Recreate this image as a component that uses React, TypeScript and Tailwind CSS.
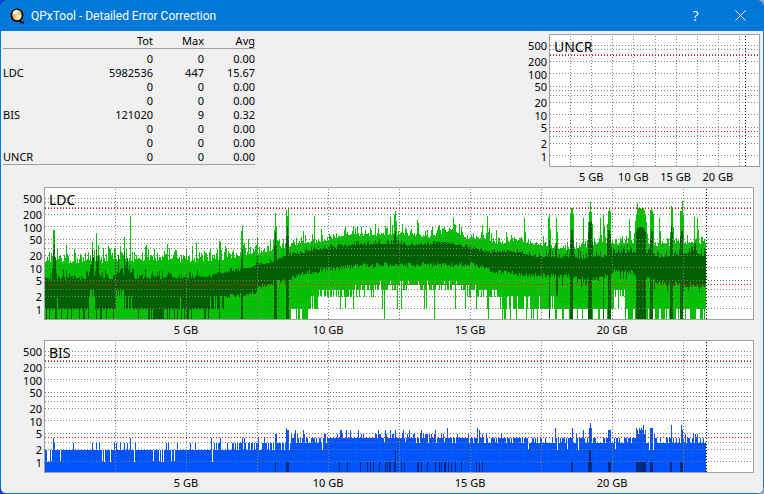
import React from 'react';

// ─── Types ───────────────────────────────────────────────────────────────────

type Range = [top: number, bottom: number];
type Keys = [x: number, value: number][];

interface Column {
  x: number;
  full: Range;
  avg?: Range;
}

// ─── Helpers ─────────────────────────────────────────────────────────────────

const PLOT_H = 131;
const DECADE = 41;

// Row of a value on the logarithmic axis
const rowOf = (value: number) => Math.round(121.4 - DECADE * Math.log10(value));

const lerp = (keys: Keys, x: number) => {
  for (let i = 1; i < keys.length; i++) {
    const [x0, v0] = keys[i - 1];
    const [x1, v1] = keys[i];
    if (x <= x1) return v0 + ((v1 - v0) * (x - x0)) / (x1 - x0);
  }
  return keys[keys.length - 1][1];
};

const makeRandom = (seed: number) => () => {
  seed = (seed * 1664525 + 1013904223) % 4294967296;
  return seed / 4294967296;
};

const inside = (ranges: number[][], x: number) => ranges.some(([a, b]) => x >= a && x <= b);

// ─── LDC samples ─────────────────────────────────────────────────────────────

const LDC_TOP: Keys = [
  [0, 74], [45, 74], [110, 72], [145, 73], [180, 71], [212, 65], [230, 61], [255, 56], [283, 52],
  [297, 48], [345, 46], [357, 46], [385, 49], [400, 44], [410, 43], [420, 50], [435, 50], [455, 56],
  [470, 52], [490, 56], [515, 61], [535, 60], [555, 54], [575, 56], [595, 54], [620, 59], [631, 54],
  [645, 56], [660, 56],
];
const LDC_AVG_TOP: Keys = [
  [0, 91], [145, 90], [165, 88], [175, 85], [195, 82], [212, 77], [225, 74], [243, 67], [275, 61],
  [300, 58], [310, 56], [350, 55], [365, 57], [385, 56], [395, 54], [410, 56], [425, 60], [445, 64],
  [465, 63], [495, 69], [520, 69], [535, 70], [560, 68], [580, 64], [600, 64], [615, 69], [650, 64],
  [660, 68],
];
const LDC_AVG_BOTTOM: Keys = [
  [181, 108], [210, 105], [212, 100], [225, 95], [240, 93], [255, 85], [275, 82], [300, 79], [315, 77],
  [345, 76], [425, 76], [435, 77], [445, 83], [475, 86], [515, 88], [555, 90], [569, 82], [580, 82],
  [595, 87], [615, 95], [660, 97],
];
// Lowest value that still occurs, by position
const LDC_MIN: Keys = [
  [283, 2.6], [300, 2.4], [320, 3.2], [335, 3.6], [360, 3.6], [395, 4], [412, 3.6], [430, 3], [455, 2.2],
];

const LDC_PEAKS = new Map<number, number>([
  [8, 42], [9, 42], [21, 57], [29, 61], [47, 54], [49, 62], [51, 45], [53, 57], [58, 60], [63, 58],
  [69, 61], [75, 58], [79, 49], [81, 61], [85, 28], [87, 64], [100, 59], [103, 61], [122, 56], [124, 60],
  [131, 62], [141, 61], [147, 58], [151, 55], [165, 60], [174, 53], [175, 54], [181, 60], [188, 62],
  [196, 43], [197, 38], [205, 59], [212, 50], [219, 60], [223, 58], [229, 42], [230, 25], [231, 38],
  [232, 52], [234, 52], [241, 22], [242, 28], [243, 21], [258, 43], [269, 28], [276, 41], [300, 38],
  [308, 38], [310, 40], [330, 36], [345, 29], [349, 27], [350, 23], [351, 33], [372, 32], [373, 35],
  [397, 40], [403, 43], [408, 30], [437, 37], [442, 28], [444, 40], [451, 42], [479, 30], [480, 44],
  [498, 48], [503, 30], [504, 27], [505, 41], [511, 30], [512, 44], [525, 25], [526, 20], [527, 20],
  [528, 27], [538, 30], [543, 34], [544, 24], [545, 14], [546, 24], [547, 36], [555, 30], [558, 26],
  [559, 38], [562, 36], [563, 23], [564, 19], [565, 23], [584, 31], [585, 43], [589, 45], [590, 33],
  [591, 27], [592, 15], [593, 20], [594, 21], [595, 20], [596, 21], [597, 20], [598, 20], [599, 22],
  [600, 26], [601, 34], [602, 46], [605, 22], [606, 20], [607, 23], [608, 26], [614, 30], [615, 43],
  [625, 44], [626, 18], [627, 19], [628, 39], [635, 23], [636, 23], [637, 13], [638, 27], [649, 29],
  [652, 30], [653, 42],
]);
const LDC_AVG_PEAKS = new Map<number, number>([
  [7, 80], [8, 62], [9, 56], [10, 70], [21, 82], [47, 72], [48, 76], [51, 70], [53, 74], [70, 74],
  [73, 78], [79, 70], [82, 76], [152, 82], [174, 72], [196, 70], [197, 61], [212, 68], [229, 58],
  [230, 44], [231, 58], [241, 48], [242, 38], [243, 48], [349, 46], [350, 43], [351, 50], [504, 52],
  [511, 55], [525, 52], [526, 42], [527, 42], [528, 50], [543, 44], [544, 34], [545, 33], [546, 34],
  [547, 54], [562, 50], [563, 42], [564, 42], [565, 46], [591, 43], [592, 40], [593, 40], [594, 38],
  [595, 39], [596, 39], [597, 39], [598, 40], [599, 42], [600, 44], [605, 50], [606, 43], [607, 43],
  [625, 50], [626, 38], [627, 44], [635, 48], [636, 43], [637, 43], [649, 56], [650, 55],
]);
const LDC_FULL_AVG = [
  [174, 174], [196, 197], [229, 231], [241, 243], [504, 504], [525, 527], [543, 546], [558, 558],
  [563, 565], [591, 600], [605, 607], [625, 627], [635, 637],
];

const buildLdc = (): Column[] => {
  const rnd = makeRandom(77);
  const columns: Column[] = [];
  for (let x = 0; x <= 660; x++) {
    const early = x < 240;
    const jitter = rnd() * rnd() * (early ? 17 : 13) - 1;
    let top = LDC_PEAKS.get(x) ?? lerp(LDC_TOP, x) - jitter;
    const avgJitter = rnd() * rnd() * (x > 145 && x < 500 ? 6 : 12) - 1;
    let avgTop = LDC_AVG_PEAKS.get(x) ?? lerp(LDC_AVG_TOP, x) - avgJitter;
    if (inside([[44, 53], [69, 84]], x)) avgTop -= rnd() * 14;

    let bottom = PLOT_H;
    let avgBottom: number;
    const pick = rnd();
    if (x < 165) {
      avgBottom = pick < 0.3 || inside([[108, 118]], x) ? PLOT_H : 121;
      if (inside([[44, 49], [71, 78]], x)) avgBottom = pick < 0.5 ? 102 : 108;
      if ([12, 80, 83, 86, 135].includes(x)) avgBottom = 108;
    } else if (x < 181) {
      avgBottom = pick < 0.5 ? 108 : 121;
    } else {
      avgBottom = lerp(LDC_AVG_BOTTOM, x) + rnd() * 5 - 2;
      if (x > 510 && pick < 0.15) avgBottom += 8;
      if (x === 511 || x === 512) avgBottom = 108;
    }

    if (x > 244 && x < 283) {
      bottom = pick < 0.75 ? 121 : 108;
      if (x < 263 && pick > 0.5) bottom = PLOT_H;
      if (x > 272) bottom = pick < 0.35 ? 121 : pick < 0.7 ? 108 : 102;
    } else if (x >= 283 && x < 455) {
      const low = Math.round(lerp(LDC_MIN, x) + (rnd() - 0.5) * 2);
      bottom = rowOf(Math.max(2, low));
      if (pick < 0.07) bottom = 121;
      if ([339, 389, 443].includes(x)) bottom = PLOT_H;
    } else if (x >= 455 && x < 569) {
      bottom = pick < (x - 385) / 150 ? 121 : 108;
      if (pick > 0.9 || pick < 0.06) bottom = PLOT_H;
    } else if (x >= 569 && x < 580) {
      bottom = pick < 0.5 ? 108 : pick < 0.8 ? 102 : 121;
    } else if (x >= 580) {
      bottom = pick < 0.6 ? 121 : PLOT_H;
    }

    if (inside(LDC_FULL_AVG, x)) {
      avgBottom = PLOT_H;
      bottom = PLOT_H;
    }
    top = Math.round(Math.min(top, avgTop));
    columns.push({
      x,
      full: [top, Math.round(bottom)],
      avg: [Math.round(avgTop), Math.round(Math.min(avgBottom, bottom))],
    });
  }
  return columns;
};

// ─── BIS samples ─────────────────────────────────────────────────────────────

const BIS_VALUES: Record<number, number[]> = {
  1: [2, 3, 4, 6, 15, 57, 59, 65, 89, 108, 114, 116, 118, 126, 129, 167],
  3: [
    9, 28, 47, 51, 54, 69, 71, 75, 79, 82, 90, 121, 123, 132, 145, 150, 169, 171, 173, 174, 182, 187,
    188, 190,
  ],
  4: [8, 85, 166, 175, 197, 199, 213, 219],
  5: [230, 231, 648, 650, 652, 593, 599],
  6: [
    242, 243, 250, 258, 295, 296, 301, 305, 313, 333, 340, 345, 350, 358, 364, 376, 390, 434, 563, 564,
    565, 538, 592, 600, 637, 545,
  ],
  7: [241, 402, 432, 510, 527, 544, 546, 591, 594, 596, 605, 606, 607],
  8: [598, 626, 636],
  9: [545],
};
const BIS_AVG = [
  [230, 230], [241, 243], [294, 294], [302, 302], [315, 315], [322, 322], [325, 325], [328, 328],
  [334, 334], [340, 340], [342, 342], [344, 345], [349, 350], [356, 356], [359, 359], [372, 373],
  [376, 376], [382, 382], [390, 390], [394, 394], [396, 396], [399, 400], [403, 403], [406, 406],
  [410, 410], [416, 416], [431, 431], [434, 434], [437, 437], [526, 527], [543, 546], [563, 565],
  [591, 600], [605, 607], [625, 626], [635, 637],
];

const buildBis = (): Column[] => {
  const rnd = makeRandom(19);
  const fixed = new Map<number, number>();
  Object.entries(BIS_VALUES).forEach(([value, xs]) => xs.forEach((x) => fixed.set(x, Number(value))));

  const columns: Column[] = [];
  for (let x = 0; x <= 660; x++) {
    const pick = rnd();
    let value = 2;
    if (x >= 190 && x < 245) value = pick < 0.75 ? 3 : 2;
    else if (x >= 245 && x < 283) value = pick < 0.05 ? 2 : pick < 0.35 ? 3 : pick < 0.85 ? 4 : 5;
    else if (x >= 283 && x < 420) value = pick < 0.06 ? 3 : pick < 0.75 ? 4 : 5;
    else if (x >= 420 && x < 475) value = pick < 0.2 ? 3 : pick < 0.9 ? 4 : 5;
    else if (x >= 475) value = pick < 0.08 ? 2 : pick < 0.55 ? 3 : pick < 0.93 ? 4 : 5;
    if (x > 592 && x < 600) value = 6;
    value = fixed.get(x) ?? value;

    const column: Column = { x, full: [rowOf(value), PLOT_H] };
    if (inside(BIS_AVG, x)) {
      const tall = x === 350 || x === 544 || x === 545;
      column.avg = [rowOf(tall ? 2 : 1), PLOT_H];
    }
    columns.push(column);
  }
  return columns;
};

const LDC_COLUMNS = buildLdc();
const BIS_COLUMNS = buildBis();

// ─── Chart ───────────────────────────────────────────────────────────────────

const GRID_VALUES = [1, 2, 3, 5, 10, 20, 30, 40, 50, 100, 200, 300, 400, 500];
const Y_TICKS = [500, 200, 100, 50, 20, 10, 5, 2, 1];
const X_TICKS = ['5 GB', '10 GB', '15 GB', '20 GB'];

const barsPath = (columns: Column[], key: 'full' | 'avg') =>
  columns
    .map((column) => {
      const range = column[key];
      return range ? `M${column.x} ${range[0]}h1V${range[1]}h-1z` : '';
    })
    .join('');

interface ChartProps {
  title: string;
  width: number;
  end: number;
  columns?: Column[];
  fill?: string;
  avgFill?: string;
}

const Chart: React.FC<ChartProps> = ({ title, width, end, columns = [], fill, avgFill }) => {
  const step = (width + 2) / 10;
  return (
    <section className="flex" aria-label={title}>
      <div className="grid w-[43px] shrink-0 grid-rows-[18px_16px_13px_12px_16px_13px_12px_16px_13px] content-start items-end pr-0.5 text-right leading-3">
        {Y_TICKS.map((tick) => (
          <span key={tick}>{tick}</span>
        ))}
      </div>
      <div className="min-w-0 flex-1">
        <div className="relative border border-[#a0a0a0] bg-white">
          <svg
            className="block h-[131px] w-full"
            viewBox={`0 0 ${width} ${PLOT_H}`}
            preserveAspectRatio="none"
            shapeRendering="crispEdges"
            aria-hidden="true"
          >
            <path d={barsPath(columns, 'full')} fill={fill} />
            <path d={barsPath(columns, 'avg')} fill={avgFill} />
            <g stroke="#808080" strokeDasharray="1 2">
              {GRID_VALUES.map((value) => (
                <path key={value} d={`M0 ${rowOf(value) - 0.5}H${width}`} />
              ))}
              {[1, 2, 3, 4, 5, 6, 7, 8, 9].map((i) => (
                <path key={i} d={`M${Math.round(i * step) - 0.5} 1V${PLOT_H}`} />
              ))}
            </g>
            <g stroke="#ff0000" strokeDasharray="1 2">
              <path d={`M0 20.5H${width}`} />
              <path d={`M0 96.5H${width}`} />
            </g>
            <path d={`M${end + 0.5} 1V${PLOT_H}`} stroke="#000" strokeDasharray="1 2" />
          </svg>
          <h2 className="absolute top-0.5 left-1 text-sm leading-5">{title}</h2>
        </div>
        <div className="mt-[3px] grid grid-cols-[1fr_2fr_2fr_2fr_2fr_1fr] text-center leading-[14px]">
          <span />
          {X_TICKS.map((tick) => (
            <span key={tick} className="whitespace-nowrap">{tick}</span>
          ))}
        </div>
      </div>
    </section>
  );
};

// ─── Summary table ───────────────────────────────────────────────────────────

const ROWS = [
  ['', '0', '0', '0.00'],
  ['LDC', '5982536', '447', '15.67'],
  ['', '0', '0', '0.00'],
  ['', '0', '0', '0.00'],
  ['BIS', '121020', '9', '0.32'],
  ['', '0', '0', '0.00'],
  ['', '0', '0', '0.00'],
  ['UNCR', '0', '0', '0.00'],
];

const Summary: React.FC = () => (
  <div className="ml-0.5 w-[252px]">
    <table className="w-full table-fixed border-collapse text-right leading-[14px]">
      <thead>
        <tr className="h-[14px]">
          <th className="w-[60px]" aria-label="Name" />
          <th className="font-normal">Tot</th>
          <th className="w-[51px] font-normal">Max</th>
          <th className="w-[51px] font-normal">Avg</th>
        </tr>
      </thead>
      <tbody className="border-y border-[#a0a0a0]">
        <tr className="h-[3px]" aria-hidden="true" />
        {ROWS.map(([name, tot, max, avg], i) => (
          <tr key={i} className="h-[14px]">
            <th className="p-0 text-left font-normal">{name}</th>
            <td className="p-0">{tot}</td>
            <td className="p-0">{max}</td>
            <td className="p-0">{avg}</td>
          </tr>
        ))}
      </tbody>
    </table>
  </div>
);

// ─── Title bar ───────────────────────────────────────────────────────────────

const AppIcon: React.FC = () => (
  <svg width="16" height="16" viewBox="0 0 16 16" aria-hidden="true">
    <path d="M9 11.5l3.5 3h2.5" fill="none" stroke="#000" strokeWidth="2" />
    <ellipse cx="8" cy="7.2" rx="6.4" ry="6.8" fill="#000" />
    <ellipse cx="8" cy="7" rx="4.6" ry="5.2" fill="#f8d080" />
    <path d="M8 7L3.6 5.4A4.6 5.2 0 0 1 8 1.8z" fill="#fff8e0" />
    <path d="M8 7l4.6.6A4.6 5.2 0 0 1 8.5 12.2z" fill="#fff0b0" />
    <path d="M8 7l-3.4 3.6A4.6 5.2 0 0 1 3.5 6z" fill="#f4a850" />
    <circle cx="8" cy="7" r="1.6" fill="#e8f0f8" />
    <circle cx="8" cy="7" r="0.6" fill="#4090c0" />
  </svg>
);

const TitleBar: React.FC = () => (
  <header className="flex h-[31px] items-center bg-[#0078d7] pr-px pl-[9px] text-white">
    <AppIcon />
    <h1 className="ml-1.5 flex-1 font-['Roboto',sans-serif] text-xs">QPxTool - Detailed Error Correction</h1>
    <button type="button" aria-label="Help" className="h-full w-[45px] font-['Open_Sans',sans-serif] text-sm">
      ?
    </button>
    <button type="button" aria-label="Close" className="flex h-full w-[45px] items-center justify-center">
      <svg width="11" height="11" viewBox="0 0 11 11" stroke="#fff" aria-hidden="true">
        <path d="M.5.5l10 10M10.5.5l-10 10" />
      </svg>
    </button>
  </header>
);

// ─── Window ──────────────────────────────────────────────────────────────────

const App: React.FC = () => (
  <div className="bg-linear-to-r from-[#0a3fc8] to-[#8aa4bc]">
    <div className="overflow-hidden rounded-lg bg-[#0078d7] font-['Noto_Sans',sans-serif] text-[11px] text-black">
      <TitleBar />
      <main className="mx-px mb-px flex flex-col gap-[3px] bg-[#f0f0f0] pt-[3px] pb-[3px]">
        <div className="flex justify-between pr-[3px]">
          <Summary />
          <div className="w-[254px]">
            <Chart title="UNCR" width={209} end={195} />
          </div>
        </div>
        <div className="flex flex-col gap-[3px] pr-[9px]">
          <Chart title="LDC" width={708} end={661} columns={LDC_COLUMNS} fill="#00c000" avgFill="#006000" />
          <Chart title="BIS" width={708} end={661} columns={BIS_COLUMNS} fill="#0055ff" avgFill="#002a80" />
        </div>
      </main>
    </div>
  </div>
);

export default App;
